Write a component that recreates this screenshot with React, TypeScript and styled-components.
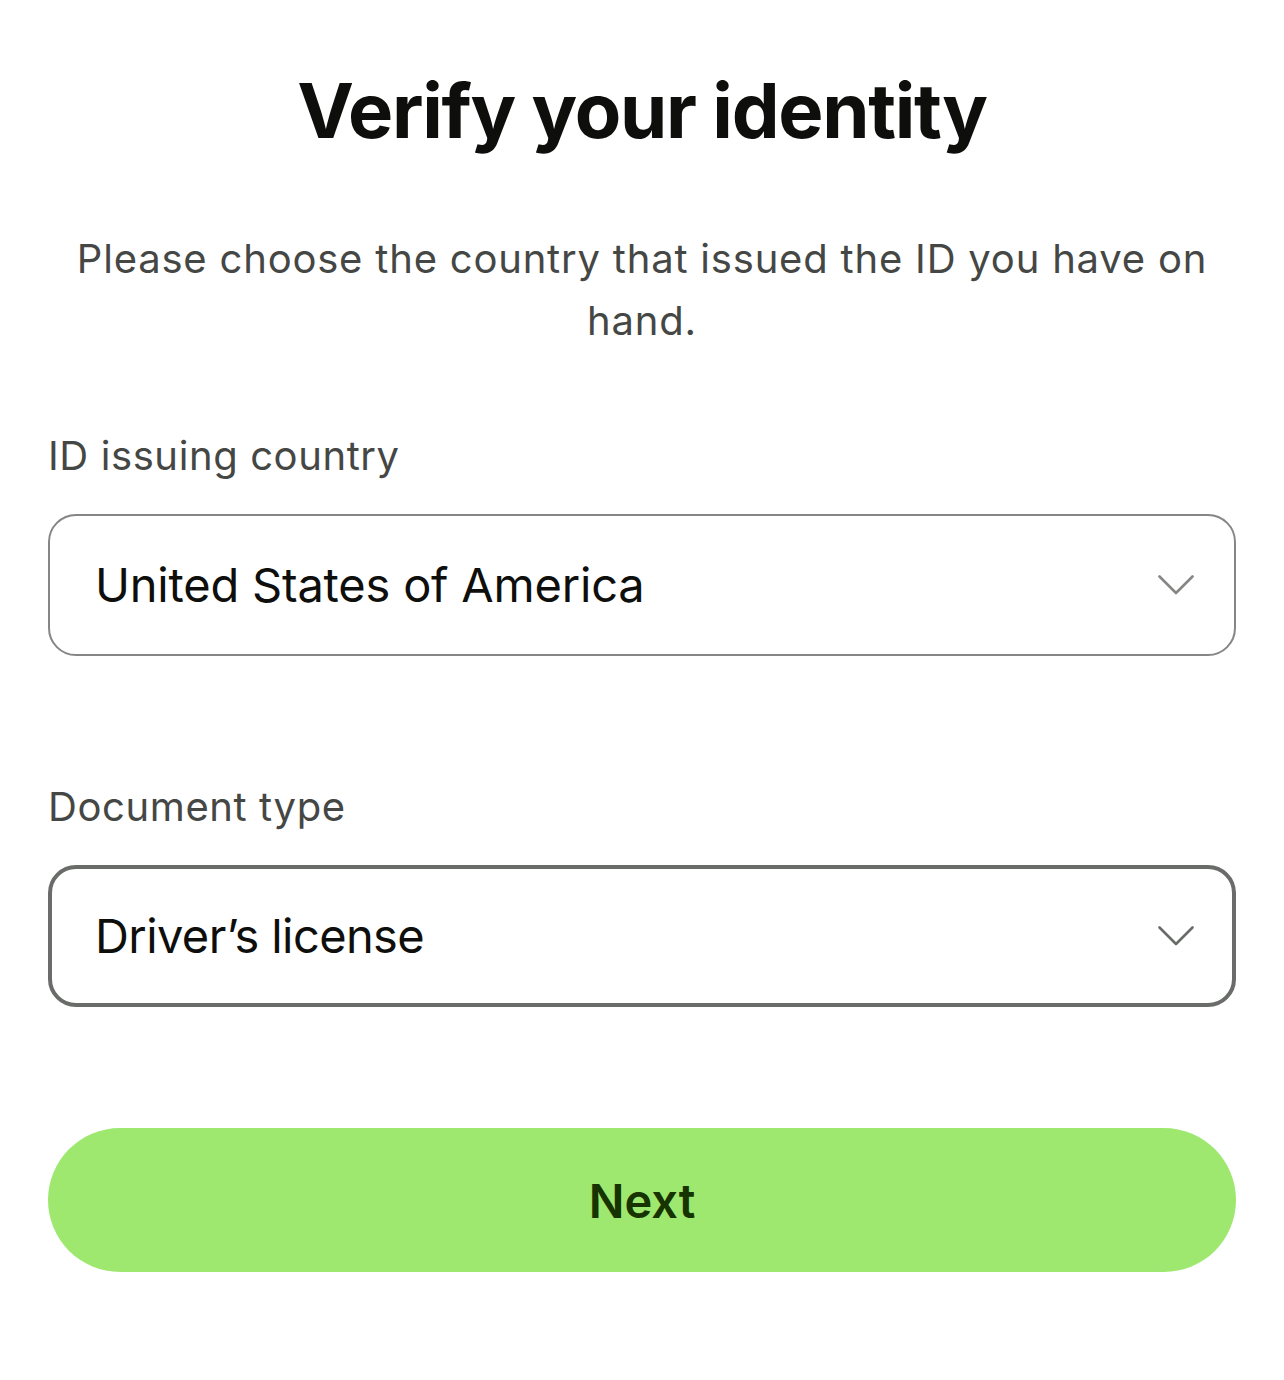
import styled, { createGlobalStyle } from 'styled-components';

const GlobalStyle = createGlobalStyle`
  html, body {
    margin: 0;
    padding: 0;
    background: #ffffff;
  }
  body {
    font-family: Inter, "Noto Sans", "Liberation Sans", sans-serif;
    color: #0e0f0c;
  }
`;

const Page = styled.main`
  display: flex;
  flex-direction: column;
  padding: 64px 48px 108px;
`;

const Title = styled.h1`
  margin: 0;
  font-size: 76px;
  line-height: 92px;
  font-weight: 700;
  letter-spacing: -1.3px;
  text-align: center;
  color: #0e0f0c;
`;

const Subtitle = styled.p`
  margin: 72px 0 0;
  font-size: 40px;
  line-height: 62px;
  font-weight: 400;
  letter-spacing: 0.8px;
  text-align: center;
  color: #454745;
`;

const Field = styled.div<{ $gap: number }>`
  display: flex;
  flex-direction: column;
  gap: 34px;
  margin-top: ${(p) => p.$gap}px;
`;

const Label = styled.label`
  font-size: 40px;
  line-height: 48px;
  font-weight: 400;
  letter-spacing: 0.6px;
  color: #454745;
`;

const SelectBox = styled.div<{ $border: number; $color: string }>`
  box-sizing: border-box;
  height: 142px;
  display: flex;
  align-items: center;
  justify-content: space-between;
  padding: 0 ${(p) => 42 - p.$border}px 0 ${(p) => 47 - p.$border}px;
  border: ${(p) => p.$border}px solid ${(p) => p.$color};
  border-radius: 28px;
  background: #ffffff;
`;

const SelectValue = styled.span<{ $spacing: number }>`
  font-size: 47px;
  line-height: 58px;
  font-weight: 400;
  letter-spacing: ${(p) => p.$spacing}px;
  color: #0e0f0c;
`;

const Chevron = styled.svg`
  width: 36px;
  height: 20px;
  flex-shrink: 0;
`;

const NextButton = styled.button`
  margin-top: 121px;
  height: 144px;
  border: none;
  border-radius: 72px;
  background: #9fe870;
  color: #163300;
  font-family: inherit;
  font-size: 47px;
  font-weight: 600;
  cursor: pointer;
`;

function Select({ value, border, color, spacing }: { value: string; border: number; color: string; spacing: number }) {
  return (
    <SelectBox $border={border} $color={color}>
      <SelectValue $spacing={spacing}>{value}</SelectValue>
      <Chevron viewBox="0 0 36 20" fill="none">
        <polyline points="1.5,1.5 18,18 34.5,1.5" stroke={color} strokeWidth="2.6" strokeLinecap="round" strokeLinejoin="round" />
      </Chevron>
    </SelectBox>
  );
}

export default function App() {
  return (
    <>
      <GlobalStyle />
      <Page>
        <Title>Verify your identity</Title>
        <Subtitle>Please choose the country that issued the ID you have on hand.</Subtitle>

        <Field $gap={80}>
          <Label>ID issuing country</Label>
          <Select value="United States of America" border={2} color="#868685" spacing={-0.2} />
        </Field>

        <Field $gap={127}>
          <Label>Document type</Label>
          <Select value="Driver’s license" border={4} color="#6a6c6a" spacing={-0.6} />
        </Field>

        <NextButton>Next</NextButton>
      </Page>
    </>
  );
}
